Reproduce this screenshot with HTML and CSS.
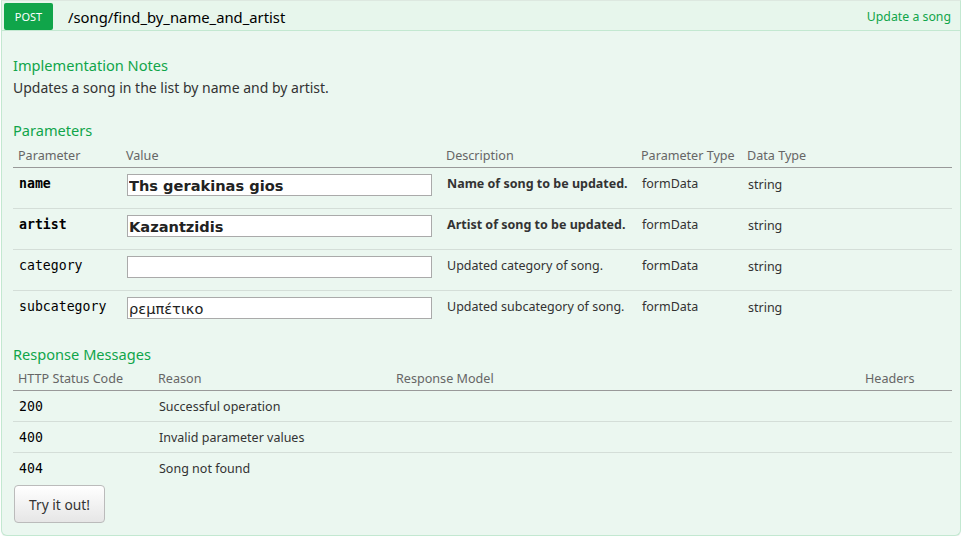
FILE: index.html
```html
<!DOCTYPE html>
<html>
<head>
<meta charset="utf-8">
<link rel="stylesheet" href="styles.css">
</head>
<body>
<div class="op">
  <div class="heading">
    <span class="method">POST</span>
    <span class="path">/song/find_by_name_and_artist</span>
    <span class="summary">Update a song</span>
  </div>
  <div class="content">
    <h4 class="first">Implementation Notes</h4>
    <p class="notes">Updates a song in the list by name and by artist.</p>
    <h4 class="params-title">Parameters</h4>
    <div class="params">
      <div class="row head">
        <div class="th">Parameter</div><div class="th">Value</div><div class="th">Description</div><div class="th">Parameter Type</div><div class="th">Data Type</div>
      </div>
      <div class="row body">
        <div class="td code req">name</div>
        <div class="td field"><input class="inp req" type="text" value="Ths gerakinas gios"></div>
        <div class="td desc req">Name of song to be updated.</div>
        <div class="td">formData</div>
        <div class="td dtype">string</div>
      </div>
      <div class="row body">
        <div class="td code req">artist</div>
        <div class="td field"><input class="inp req" type="text" value="Kazantzidis"></div>
        <div class="td desc req">Artist of song to be updated.</div>
        <div class="td">formData</div>
        <div class="td dtype">string</div>
      </div>
      <div class="row body">
        <div class="td code">category</div>
        <div class="td field"><input class="inp" type="text" value=""></div>
        <div class="td desc">Updated category of song.</div>
        <div class="td">formData</div>
        <div class="td dtype">string</div>
      </div>
      <div class="row body last">
        <div class="td code">subcategory</div>
        <div class="td field"><input class="inp" type="text" value="ρεμπέτικο"></div>
        <div class="td desc">Updated subcategory of song.</div>
        <div class="td">formData</div>
        <div class="td dtype">string</div>
      </div>
    </div>
    <h4 class="resp-title">Response Messages</h4>
    <div class="resp">
      <div class="row head">
        <div class="th">HTTP Status Code</div><div class="th">Reason</div><div class="th">Response Model</div><div class="th">Headers</div>
      </div>
      <div class="row body">
        <div class="td code">200</div><div class="td">Successful operation</div><div class="td"></div><div class="td"></div>
      </div>
      <div class="row body">
        <div class="td code">400</div><div class="td">Invalid parameter values</div><div class="td"></div><div class="td"></div>
      </div>
      <div class="row body last">
        <div class="td code">404</div><div class="td">Song not found</div><div class="td"></div><div class="td"></div>
      </div>
    </div>
    <button class="try" type="button">Try it out!</button>
  </div>
</div>
</body>
</html>
```

FILE: styles.css
```css
html, body {
  margin: 0;
  padding: 0;
  background: #ffffff;
}

body {
  font-family: "Noto Sans", "Open Sans", "DejaVu Sans", sans-serif;
  color: #333333;
}

.op {
  width: 960px;
  margin-left: 1px;
}

.heading {
  display: flex;
  align-items: center;
  height: 31px;
  box-sizing: border-box;
  background: #e7f6ec;
  border: 1px solid #c3e8d1;
  border-top: 1px solid #dde8e0;
  padding: 2px 9px 0 2px;
}

.method {
  display: inline-block;
  width: 49px;
  height: 27px;
  line-height: 28px;
  background: #10a54a;
  color: #ffffff;
  font-size: 11px;
  text-align: center;
  border-radius: 2px;
}

.path {
  margin-left: 15px;
  font-size: 14.8px;
  color: #000000;
}

.summary {
  margin-left: auto;
  font-size: 12.3px;
  color: #10a54a;
}

.content {
  background: #ebf7f0;
  border: 1px solid #c3e8d1;
  border-top: none;
  border-radius: 0 0 6px 6px;
  padding: 24px 8px 12px 11px;
  box-shadow: 0 1px 1px rgba(0, 0, 0, 0.06);
}

h4 {
  margin: 0;
  font-size: 14.6px;
  line-height: 20px;
  font-weight: normal;
  color: #10a54a;
}

.notes {
  margin: 3px 0 0 0;
  font-size: 14px;
  line-height: 20px;
  color: #333333;
}

.params-title {
  margin-top: 22px;
}

.resp-title {
  margin-top: 13px;
}

.row {
  display: grid;
}

.params .row {
  grid-template-columns: 108px 320px 195px 106px 1fr;
}

.resp .row {
  grid-template-columns: 140px 238px 469px 1fr;
}

.row.head {
  border-bottom: 1px solid #999999;
}

.params .row.head {
  height: 27px;
}

.resp .row.head {
  height: 26px;
}

.th {
  font-size: 12.6px;
  color: #666666;
  line-height: 18px;
  padding: 7px 0 0 5px;
}

.resp .th {
  padding-top: 6px;
}

.row.body {
  border-bottom: 1px solid #d4ded8;
}

.row.body.last {
  border-bottom: none;
}

.params .row.body {
  height: 40px;
}

.resp .row.body {
  height: 30px;
}

.td {
  font-size: 12.5px;
  line-height: 18px;
  padding: 7px 0 0 6px;
  color: #333333;
}

.td.field {
  padding-top: 6px;
}

.code {
  font-family: "DejaVu Sans Mono", "Liberation Mono", monospace;
  font-size: 13.2px;
  color: #000000;
}

.code.req {
  font-weight: bold;
}

.desc.req {
  font-weight: bold;
}

.dtype {
  padding-top: 8px;
}

.inp {
  display: block;
  box-sizing: border-box;
  width: 305px;
  height: 22px;
  margin: 0;
  padding: 0 1px;
  border: 1px solid #aaaaaa;
  background: #ffffff;
  font-family: "DejaVu Sans", sans-serif;
  font-size: 14.6px;
  color: #222222;
}

.inp.req {
  font-weight: bold;
}

.try {
  display: block;
  margin-top: 2px;
  margin-left: 1px;
  width: 91px;
  height: 38px;
  border: 1px solid #bbbbbb;
  border-radius: 4px;
  background: linear-gradient(#ffffff, #e6e6e6);
  font-family: "Noto Sans", "Open Sans", sans-serif;
  font-size: 13.8px;
  color: #333333;
  padding: 0;
}
```
